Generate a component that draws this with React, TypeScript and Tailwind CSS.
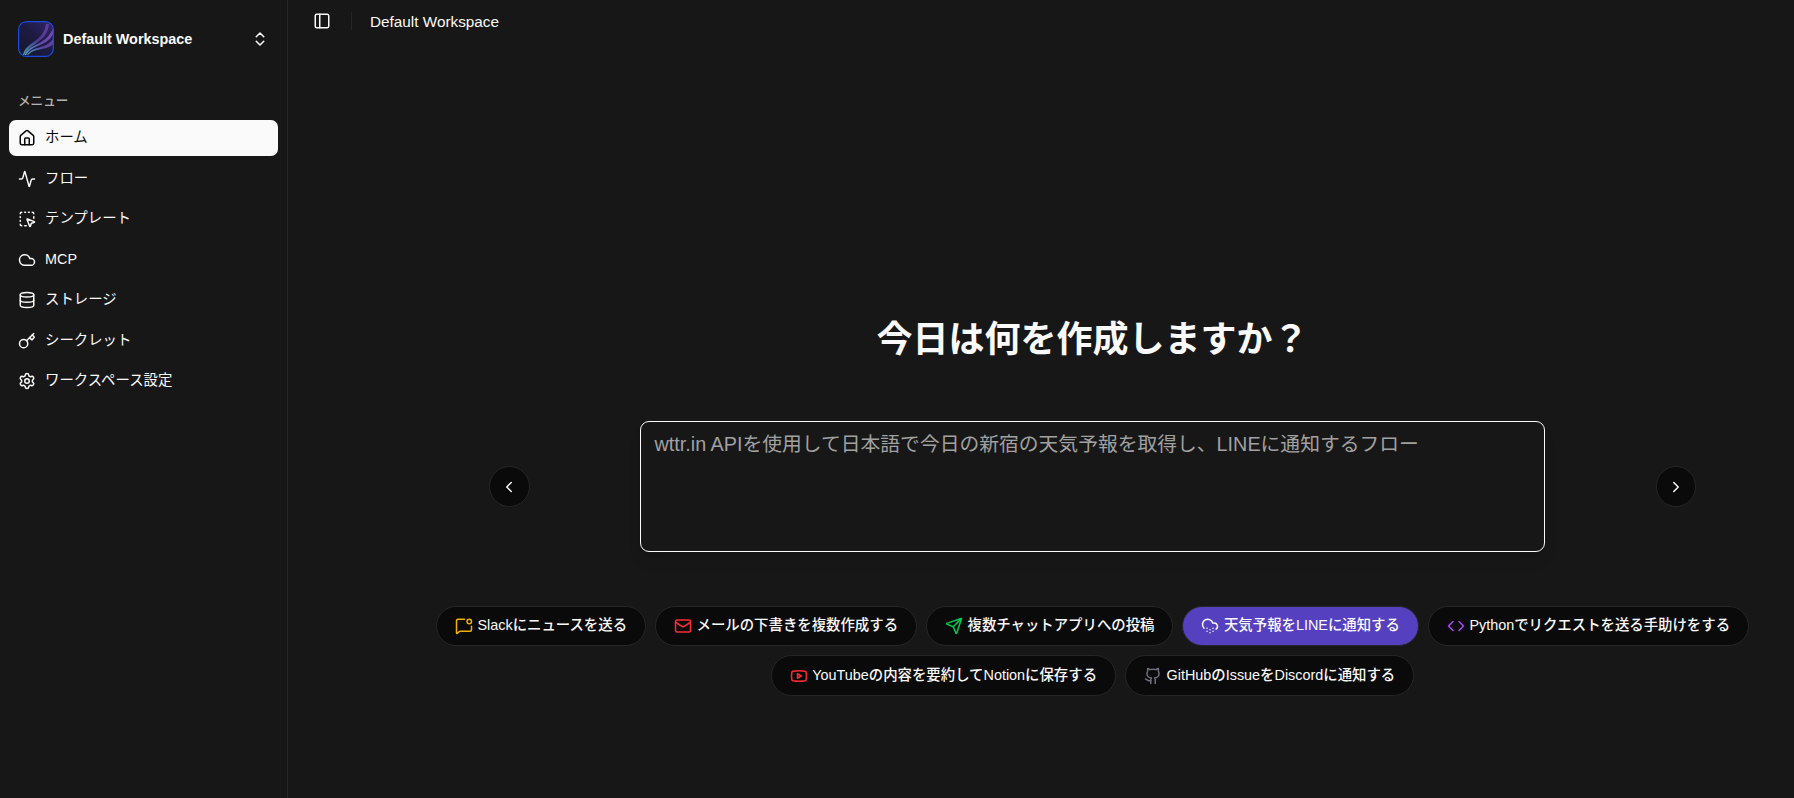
import React from 'react';
import {
  Activity,
  ChevronLeft,
  ChevronRight,
  ChevronsUpDown,
  Cloud,
  CloudSnow,
  Code,
  Database,
  Github,
  House,
  Key,
  Mail,
  MessageSquareDot,
  PanelLeft,
  Send,
  Settings,
  SquareDashedMousePointer,
  Youtube,
  type LucideIcon
} from 'lucide-react';

interface NavItem {
  label: string;
  icon: LucideIcon;
  active?: boolean;
}

interface Suggestion {
  label: string;
  icon: LucideIcon;
  iconClass: string;
  active?: boolean;
}

const navItems: NavItem[] = [
  { label: 'ホーム', icon: House, active: true },
  { label: 'フロー', icon: Activity },
  { label: 'テンプレート', icon: SquareDashedMousePointer },
  { label: 'MCP', icon: Cloud },
  { label: 'ストレージ', icon: Database },
  { label: 'シークレット', icon: Key },
  { label: 'ワークスペース設定', icon: Settings }
];

const suggestions: Suggestion[] = [
  { label: 'Slackにニュースを送る', icon: MessageSquareDot, iconClass: 'text-[#f0b100]' },
  { label: 'メールの下書きを複数作成する', icon: Mail, iconClass: 'text-[#fb2c36]' },
  { label: '複数チャットアプリへの投稿', icon: Send, iconClass: 'text-[#00c950]' },
  { label: '天気予報をLINEに通知する', icon: CloudSnow, iconClass: 'text-neutral-50', active: true },
  { label: 'Pythonでリクエストを送る手助けをする', icon: Code, iconClass: 'text-[#ad46ff]' },
  { label: 'YouTubeの内容を要約してNotionに保存する', icon: Youtube, iconClass: 'text-[#fb2c36]' },
  { label: 'GitHubのIssueをDiscordに通知する', icon: Github, iconClass: 'text-[#6a7282]' }
];

const WorkspaceLogo: React.FC = () => (
  <svg viewBox="0 0 36 36" className="size-9 shrink-0" fill="none">
    <defs>
      <linearGradient id="logo-bg" x1="4" y1="32" x2="34" y2="2" gradientUnits="userSpaceOnUse">
        <stop offset="0" stopColor="#17182f" />
        <stop offset="0.5" stopColor="#1d1a42" />
        <stop offset="1" stopColor="#35256a" />
      </linearGradient>
      <linearGradient id="logo-wave" x1="5" y1="34" x2="34" y2="10" gradientUnits="userSpaceOnUse">
        <stop offset="0" stopColor="#6fd3ea" />
        <stop offset="0.3" stopColor="#557fc4" />
        <stop offset="0.55" stopColor="#6248a8" />
        <stop offset="1" stopColor="#744bb8" />
      </linearGradient>
    </defs>
    <rect x="0.5" y="0.5" width="35" height="35" rx="8" fill="url(#logo-bg)" />
    <path d="M5 34C8 20 25 22 28 3h3C29 22 12 22 6.200 34z" fill="url(#logo-wave)" opacity="0.7" />
    <path d="M6.800 34C12 22 29 24 35 7v6C29 26 14 23 8 34z" fill="url(#logo-wave)" />
    <path d="M9 34C15 24 27 29 35 18v5.500C27 30 16 27 10 34z" fill="url(#logo-wave)" opacity="0.85" />
    <rect x="0.600" y="0.600" width="34.800" height="34.800" rx="8" stroke="#1a4be0" strokeWidth="1.200" />
  </svg>
);

const Sidebar: React.FC = () => (
  <aside className="flex w-72 shrink-0 flex-col border-r border-neutral-800">
    <div className="flex h-[75px] items-center gap-[9px] px-[18px] pt-[3px]">
      <WorkspaceLogo />
      <span className="flex-1 pt-px text-[14.4px] font-bold">Default Workspace</span>
      <ChevronsUpDown className="size-4.5" />
    </div>
    <nav className="flex flex-col px-[9px] pt-[9px]">
      <div className="flex h-9 items-center px-[9px] pb-0.5 text-[12.6px] font-medium text-neutral-50/70">メニュー</div>
      <ul className="flex flex-col gap-[4.5px]">
        {navItems.map(({ label, icon: Icon, active }) => (
          <li
            key={label}
            className={`flex h-9 items-center gap-[9px] rounded-[7px] px-[9px] text-[14.4px] ${
              active ? 'bg-neutral-50 text-neutral-950' : ''
            }`}
          >
            <Icon className="size-4.5 shrink-0" />
            <span>{label}</span>
          </li>
        ))}
      </ul>
    </nav>
  </aside>
);

const RoundButton: React.FC<{ icon: LucideIcon }> = ({ icon: Icon }) => (
  <button className="flex size-[40.5px] items-center justify-center rounded-full border border-neutral-800 bg-neutral-950">
    <Icon className="size-4.5" />
  </button>
);

export default function App() {
  return (
    <div className="flex h-screen overflow-hidden bg-neutral-900 font-['Liberation_Sans','Noto_Sans_CJK_JP',sans-serif] text-neutral-50">
      <Sidebar />
      <main className="flex min-w-0 flex-1 flex-col">
        <header className="flex h-[42px] items-center pl-[25px]">
          <PanelLeft className="size-4.5" />
          <div className="ml-5 h-4.5 w-px bg-neutral-800" />
          <span className="ml-[18px] pt-0.5 text-[15.3px]">Default Workspace</span>
        </header>

        <section className="flex flex-col items-center pt-[271px] pl-[103px]">
          <h1 className="text-[36px] leading-[54px] font-bold">今日は何を作成しますか？</h1>
          <div className="mt-[54px] flex w-[1207px] items-center justify-between">
            <RoundButton icon={ChevronLeft} />
            <textarea
              className="h-[131px] w-[905px] resize-none rounded-[9px] border border-neutral-50 px-[13.5px] py-[9px] text-[19.8px] leading-[27px] shadow-lg outline-none placeholder:text-[#a1a1a1]"
              placeholder="wttr.in APIを使用して日本語で今日の新宿の天気予報を取得し、LINEに通知するフロー"
            />
            <RoundButton icon={ChevronRight} />
          </div>
          <div className="mt-[53.8px] flex w-[1330px] flex-wrap justify-center gap-[9px]">
            {suggestions.map(({ label, icon: Icon, iconClass, active }) => (
              <button
                key={label}
                className={`flex h-[40.5px] items-center gap-[4.5px] rounded-full border border-neutral-800 px-4.5 text-[14.4px] font-medium whitespace-nowrap ${
                  active ? 'bg-[#5540bf]' : 'bg-neutral-950'
                }`}
              >
                <Icon className={`size-4.5 shrink-0 ${iconClass}`} />
                {label}
              </button>
            ))}
          </div>
        </section>
      </main>
    </div>
  );
}
